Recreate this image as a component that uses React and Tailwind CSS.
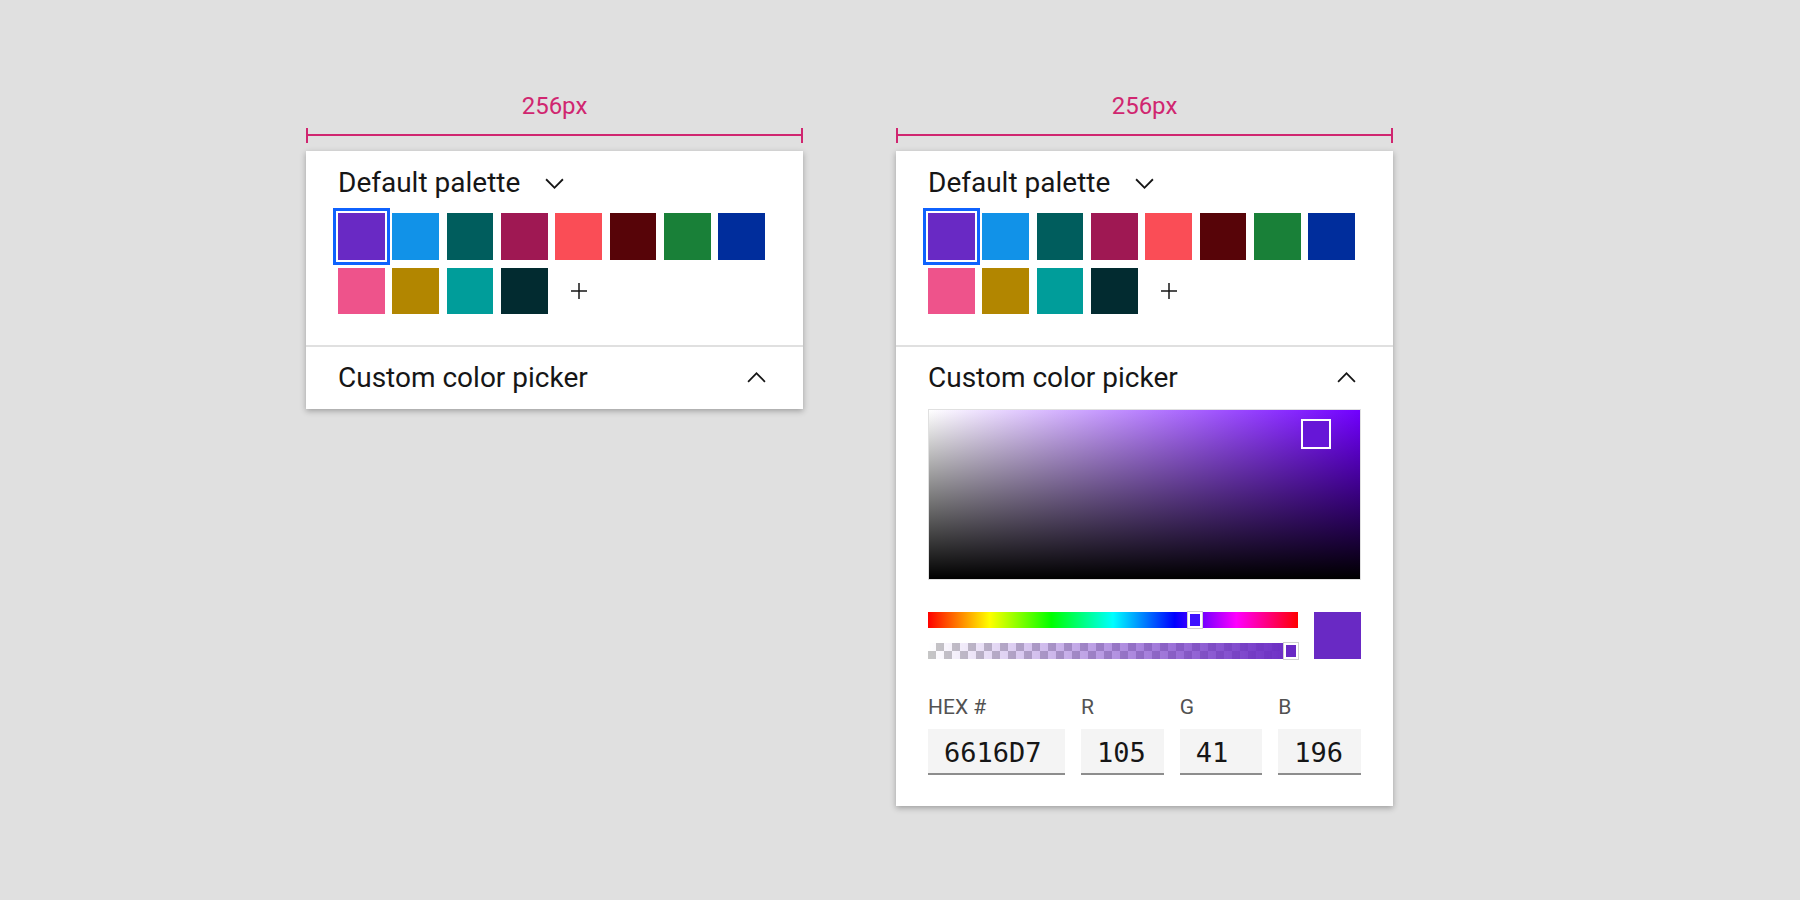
import { Fragment } from "react";

const swatches = [
  "#6929c4",
  "#1192e8",
  "#005d5d",
  "#9f1853",
  "#fa4d56",
  "#570408",
  "#198038",
  "#002d9c",
  "#ee538b",
  "#b28600",
  "#009d9a",
  "#022b30",
];

const fields = [
  { label: "HEX #", value: "6616D7" },
  { label: "R", value: "105" },
  { label: "G", value: "41" },
  { label: "B", value: "196" },
];

const ChevronDown = () => (
  <svg width="29" height="29" viewBox="0 0 16 16" fill="#161616" className="shrink-0">
    <path d="M8 11L3 6 3.7 5.3 8 9.6 12.3 5.3 13 6z" />
  </svg>
);

const ChevronUp = () => (
  <svg width="29" height="29" viewBox="0 0 16 16" fill="#161616" className="shrink-0">
    <path d="M8 5L13 10 12.3 10.7 8 6.4 3.7 10.7 3 10z" />
  </svg>
);

const Plus = () => (
  <svg width="32" height="32" viewBox="0 0 32 32" fill="#161616">
    <path d="M16.75 15.25V8h-1.5v7.25H8v1.5h7.25V24h1.5v-7.25H24v-1.5z" />
  </svg>
);

// width marker above each panel
const Measure = () => (
  <div>
    <p className="h-[28px] text-center text-[24px] leading-[28px] text-[#d02670]">256px</p>
    <div className="mt-[7.5px] h-[15px] border-x-2 border-[#d02670] pt-[6.5px]">
      <div className="h-[2px] bg-[#d02670]" />
    </div>
  </div>
);

const Picker = () => (
  <div className="px-[32px] pb-[31px]">
    <div className="relative h-[171px] border border-[#e0e0e0] bg-[linear-gradient(to_top,#000,rgba(0,0,0,0)),linear-gradient(to_right,#fff,#7100ff)]">
      <div className="absolute left-[372px] top-[9px] h-[30px] w-[30px] border-2 border-white bg-[#6616d7]" />
    </div>

    <div className="mt-[32.3px] flex h-[46.9px] gap-[16px]">
      <div className="flex flex-1 flex-col justify-between">
        <div className="relative h-[15.9px] bg-[linear-gradient(to_right,#f00,#ff0,#0f0,#0ff,#00f,#f0f,#f00)]">
          <div className="absolute left-[260px] top-0 h-full w-[14px] border-2 border-white bg-[#3d12ff] outline outline-1 outline-[#d0d0d0]" />
        </div>
        <div className="relative h-[16px] bg-[linear-gradient(to_right,rgba(105,41,196,0),#6929c4),repeating-conic-gradient(#c6c6c6_0%_25%,#ffffff_0%_50%)] bg-[length:100%_100%,16px_16px]">
          <div className="absolute right-0 top-0 h-full w-[14px] border-2 border-white bg-[#6929c4] outline outline-1 outline-[#d0d0d0]" />
        </div>
      </div>
      <div className="w-[46.7px] bg-[#6929c4]" />
    </div>

    <div className="mt-[35.8px] grid grid-cols-[137px_1fr_1fr_1fr] gap-x-[16px]">
      {fields.map((field) => (
        <div key={field.label}>
          <p className="h-[24px] text-[21px] leading-[24px] text-[#525252]">{field.label}</p>
          <div className="mt-[10px] flex h-[46px] items-center border-b-2 border-[#8d8d8d] bg-[#f4f4f4] px-[16px] pt-[4px] font-['DejaVu_Sans_Mono',monospace] text-[27px] text-[#161616]">
            {field.value}
          </div>
        </div>
      ))}
    </div>
  </div>
);

const Panel = ({ open }) => (
  <section className="mt-[8.5px] w-[497px] bg-white shadow-[0_2px_6px_rgba(0,0,0,0.3)]">
    <div className="px-[32px] pb-[30.5px] pt-[16px]">
      <div className="flex h-[32px] items-center gap-[20px]">
        <h2 className="text-[28px] leading-[32px]">Default palette</h2>
        <ChevronDown />
      </div>

      <div className="mt-[14.3px] grid grid-cols-[repeat(8,46.5px)] gap-[7.85px]">
        {swatches.map((color, index) => (
          <div
            key={color}
            className={`h-[46.5px] ${index === 0 ? "shadow-[0_0_0_2px_#fff,0_0_0_5px_#0f62fe]" : ""}`}
            style={{ backgroundColor: color }}
          />
        ))}
        <div className="flex h-[46.5px] items-center justify-center">
          <Plus />
        </div>
      </div>
    </div>

    <div className="h-[2px] bg-[#e0e0e0]" />

    <div className="flex h-[62.5px] items-center justify-between px-[32px]">
      <h2 className="text-[28px] leading-[32px]">Custom color picker</h2>
      <ChevronUp />
    </div>

    {open ? <Picker /> : null}
  </section>
);

export default function App() {
  return (
    <div className="min-h-screen bg-[#e0e0e0] font-['Roboto',sans-serif] text-[#161616]">
      <div className="flex items-start gap-[93px] pl-[306px] pt-[92px]">
        {[false, true].map((open) => (
          <Fragment key={String(open)}>
            <div className="w-[497px]">
              <Measure />
              <Panel open={open} />
            </div>
          </Fragment>
        ))}
      </div>
    </div>
  );
}
